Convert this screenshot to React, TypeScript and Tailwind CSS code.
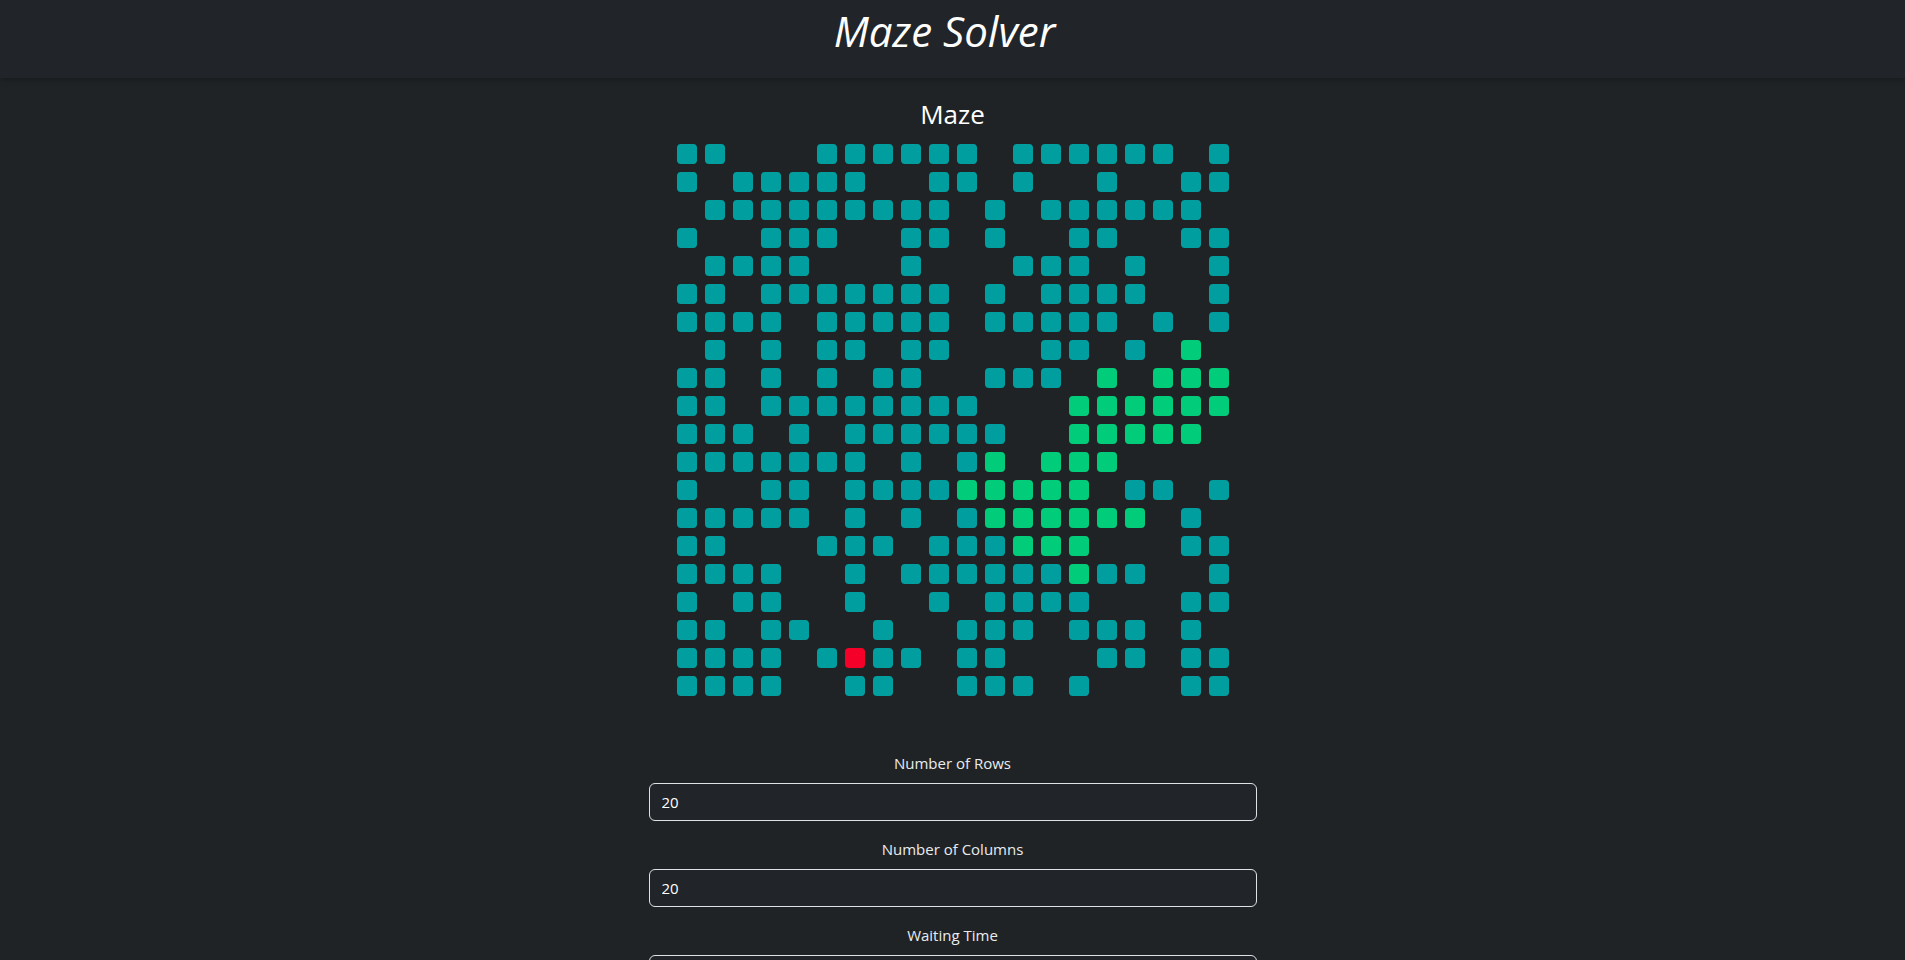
import clsx from "clsx";

const MAZE = [
  "##...######.######.#",
  "#.#####..##.#..#..##",
  ".#########.#.######.",
  "#..###..##.#..##..##",
  ".####...#...###.#..#",
  "##.#######.#.####..#",
  "####.#####.#####.#.#",
  ".#.#.##.##...##.#.g.",
  "##.#.#.##..###.g.ggg",
  "##.########...gggggg",
  "###.#.######..ggggg.",
  "#######.#.#g.ggg....",
  "#..##.####ggggg.##.#",
  "#####.#.#.#gggggg.#.",
  "##...###.###ggg...##",
  "####..#.######g##..#",
  "#.##..#..#.####...##",
  "##.##..#..###.###.#.",
  "####.#r##.##...##.##",
  "####..##..###.#...##",
];

const FIELDS = [
  { label: "Number of Rows", value: "20" },
  { label: "Number of Columns", value: "20" },
  { label: "Waiting Time", value: "50" },
];

const Cell = ({ kind }: { kind: string }) => (
  <div
    className={clsx(
      "h-5 w-5 rounded-[4px]",
      kind === "#" && "bg-[#009e9e]",
      kind === "g" && "bg-[#00cc7a]",
      kind === "r" && "bg-[#f50029]",
    )}
  />
);

const App = () => {
  return (
    <div
      className="min-h-screen bg-[#202326] text-white"
      style={{ fontFamily: '"Open Sans", "Noto Sans", sans-serif' }}
    >
      <header className="flex h-[78px] justify-center bg-[#212529] pt-[10px] shadow-[0_2px_6px_rgba(0,0,0,0.25)]">
        <h1 className="pr-[16px] text-[42px] italic leading-none text-white">Maze Solver</h1>
      </header>

      <main className="flex flex-col items-center pt-[21px]">
        <h3 className="text-[26px] leading-[1.2] text-white">Maze</h3>

        <div className="mt-[14px] grid grid-cols-[repeat(20,20px)] gap-2">
          {MAZE.map((row, r) =>
            row.split("").map((kind, c) => <Cell key={`${r}-${c}`} kind={kind} />),
          )}
        </div>

        <form className="mt-[55px] flex w-[608px] flex-col">
          {FIELDS.map((f) => (
            <div key={f.label} className="mb-4 flex flex-col">
              <label className="mb-2 text-center text-[15px] leading-6 text-[#e9ecef]">
                {f.label}
              </label>
              <input
                defaultValue={f.value}
                className="h-[38px] rounded-md border border-[#dee2e6] bg-[#212529] px-3 text-[15px] text-white outline-none"
              />
            </div>
          ))}
        </form>
      </main>
    </div>
  );
};

export default App;
